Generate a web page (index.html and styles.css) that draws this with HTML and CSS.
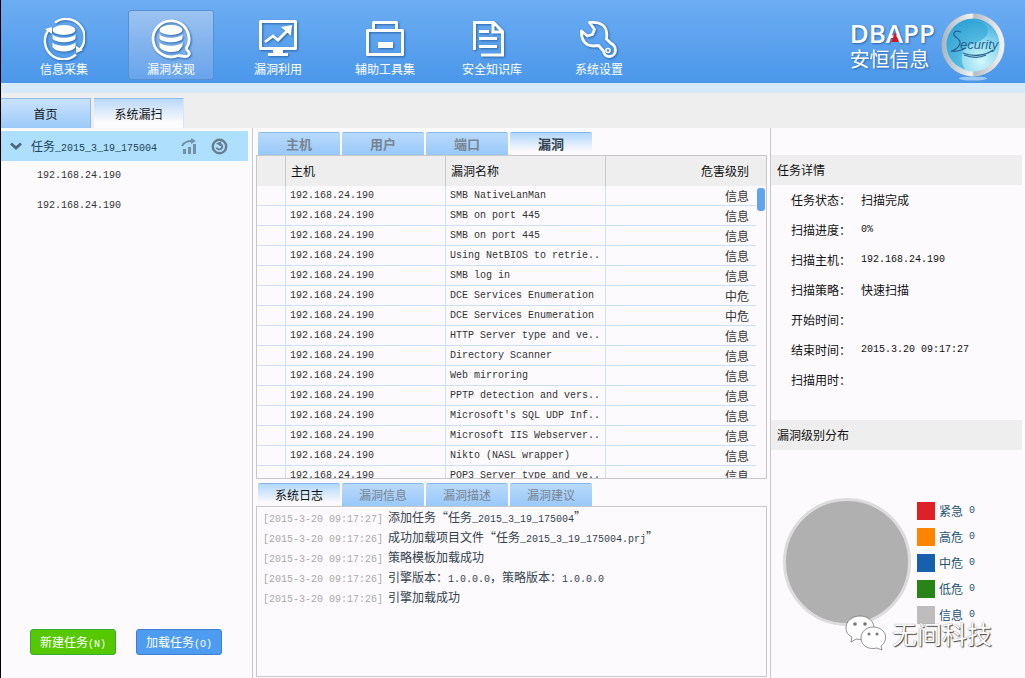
FILE: index.html
```
<!DOCTYPE html>
<html lang="zh-CN">
<head>
<meta charset="utf-8">
<title>系统漏扫</title>
<link rel="stylesheet" href="styles.css">
</head>
<body>
<div class="app">
  <header class="header">
    <nav class="toolbar">
      <button class="tool" type="button">
        <svg class="tool-icon" viewBox="0 0 42 42">
          <g fill="none" stroke="#fff" stroke-width="2.4"><path d="M12 4.600A18.500 18.500 0 0 1 37.500 31"/><path d="M33 36.500A18.500 18.500 0 0 1 5.500 12"/></g>
          <path d="M2 11l7-2v7zM40 32l-7 3 0-7z" fill="#fff"/>
          <ellipse cx="21" cy="12" rx="11.500" ry="5" fill="#fff"/>
          <path d="M9.500 16c3 5 20 5 23 0v4.500c-3 5-20 5-23 0zM9.500 24c3 5 20 5 23 0v5c-3 6-20 6-23 0z" fill="#fff"/>
        </svg>
        <span>信息采集</span>
      </button>
      <button class="tool active" type="button">
        <svg class="tool-icon" viewBox="0 0 42 42">
          <path d="M28 37.500A18 18 0 1 1 38 27c-2 3-2 4 0 6 3 3 0 6-3 5.500l-7-1" fill="none" stroke="#fff" stroke-width="2.800"/>
          <ellipse cx="21" cy="12" rx="11.500" ry="5" fill="#fff"/>
          <path d="M9.500 16c3 5 20 5 23 0v4.500c-3 5-20 5-23 0zM9.500 24c3 5 20 5 23 0v4l-4 5c-7 2-16 1-19-4z" fill="#fff"/>
        </svg>
        <span>漏洞发现</span>
      </button>
      <button class="tool" type="button">
        <svg class="tool-icon" viewBox="0 0 42 42">
          <path d="M3.500 3.500h35v27h-35z" fill="none" stroke="#fff" stroke-width="3" stroke-linejoin="round"/>
          <path d="M8 24l8-6 5 4 10-10" fill="none" stroke="#fff" stroke-width="2.800"/>
          <path d="M24 9l11-2-1 11zM16 31h10v4h5v3H11v-3h5z" fill="#fff"/>
        </svg>
        <span>漏洞利用</span>
      </button>
      <button class="tool" type="button">
        <svg class="tool-icon" viewBox="0 0 42 42">
          <path d="M9.500 11.500V4.500h23v7M3.500 12.500h35v24h-35z" fill="none" stroke="#fff" stroke-width="3" stroke-linejoin="round"/>
          <path d="M14 24h15v6H14z" fill="#fff"/>
        </svg>
        <span>辅助工具集</span>
      </button>
      <button class="tool" type="button">
        <svg class="tool-icon" viewBox="0 0 42 42">
          <path d="M3.500 32V4.500h19l9 9V37H10M22 5v9h9" fill="none" stroke="#fff" stroke-width="3"/>
          <path d="M8 13.500h10M8 20.500h18M8 28.500h18" stroke="#fff" stroke-width="3"/>
        </svg>
        <span>安全知识库</span>
      </button>
      <button class="tool" type="button">
        <svg class="tool-icon" viewBox="0 0 42 42">
          <path d="M11.500 4.500l5 7-2 5-5 1.500-6-5c-.5 9 4 15 12 15l5-.5 5 5.500c1 8 12 7 12-1 0-4-3-6-5-7l-4-4c1-7 0-11-4-14-4-3-8-3-13-2.500z" fill="none" stroke="#fff" stroke-width="2.800" stroke-linejoin="round"/>
          <circle cx="30" cy="32.500" r="2" fill="none" stroke="#fff" stroke-width="1.600"/>
        </svg>
        <span>系统设置</span>
      </button>
    </nav>
    <div class="brand">
      <div class="brand-name">
        <div class="brand-en">DB<span class="brand-a">A<svg viewBox="0 0 8 11"><path d="M4 0l4 11H0z" fill="#e01020"/></svg></span>PP</div>
        <div class="brand-cn">安恒信息</div>
      </div>
      <svg class="globe" viewBox="0 0 64 68">
        <defs>
          <linearGradient id="rim" x1="0" x2="1"><stop offset="0" stop-color="#a9b4c0"/><stop offset=".48" stop-color="#f2f2f2"/><stop offset=".52" stop-color="#b8bec6"/><stop offset="1" stop-color="#f4f4f4"/></linearGradient>
          <radialGradient id="sea" cx=".65" cy=".8" r=".8"><stop offset="0" stop-color="#d2f7fb"/><stop offset=".5" stop-color="#8bd9f0"/><stop offset="1" stop-color="#36a5da"/></radialGradient>
        </defs>
        <ellipse cx="32" cy="65.500" rx="14" ry="2" fill="#9cc8f5"/>
        <circle cx="32" cy="32" r="31.500" fill="url(#rim)"/>
        <circle cx="32" cy="32" r="26.500" fill="url(#sea)"/>
        <path d="M18 11c8-6 22-5 28 3 3 7-2 11-7 14-10 4-17 5-18 14-1 5 0 10 3 14C10 52 4 38 6 27c2-7 6-12 12-16z" fill="#2fa3d4" opacity=".6"/>
        <path d="M20 19c-8-3-9 3-4 6s4 9-5 13c5 1 10-1 14-3M22 40c9 4 22 3 30-3M23 42c8 3 16 3 22 0" fill="none" stroke="#29648f" stroke-width="1.300"/>
        <text x="19" y="36" class="globe-text">ecurity</text>
      </svg>
    </div>
  </header>
  <nav class="page-tabs">
    <button class="page-tab" type="button">首页</button>
    <button class="page-tab active" type="button">系统漏扫</button>
  </nav>
  <main class="workspace">
    <aside class="sidebar">
      <div class="task">
        <svg class="chevron" viewBox="0 0 12 8"><path d="M1 1.500l5 4.500 5-4.500" fill="none" stroke="#4c6a7c" stroke-width="2.800"/></svg>
        <span class="task-name">任务<span class="en">_2015_3_19_175004</span></span>
        <svg class="task-icon" viewBox="0 0 17 17"><path d="M2 11h3v5H2zM7 9h3v7H7zM12 6h3v10h-3z" fill="#7293a6"/><path d="M1 8c2-4 6-5 10-5" fill="none" stroke="#7293a6" stroke-width="2"/><path d="M10 0l5 3-5 3z" fill="#7293a6"/></svg>
        <svg class="task-icon" viewBox="0 0 17 17"><circle cx="8.500" cy="8.500" r="6.700" fill="none" stroke="#647e8e" stroke-width="2.400"/><path d="M9 5.500a3 3 0 1 1-3.500 4" fill="none" stroke="#647e8e" stroke-width="1.800"/><path d="M5 5.500l5-2v5z" fill="#647e8e"/></svg>
      </div>
      <div class="host en">192.168.24.190</div>
      <div class="host en">192.168.24.190</div>
      <div class="actions">
        <button class="action new" type="button">新建任务<span class="en">(N)</span></button>
        <button class="action load" type="button">加载任务<span class="en">(O)</span></button>
      </div>
    </aside>
    <section class="center">
      <div class="tabs results-tabs">
        <button class="tab" type="button">主机</button>
        <button class="tab" type="button">用户</button>
        <button class="tab" type="button">端口</button>
        <button class="tab active" type="button">漏洞</button>
      </div>
      <div class="results">
        <table>
          <colgroup><col class="c-mark"><col class="c-host"><col class="c-name"><col><col class="c-scroll"></colgroup>
          <thead><tr><th></th><th>主机</th><th>漏洞名称</th><th class="level">危害级别</th><th></th></tr></thead>
          <tbody>
            <tr><td></td><td class="en">192.168.24.190</td><td class="en">SMB NativeLanMan</td><td class="level">信息</td></tr>
            <tr><td></td><td class="en">192.168.24.190</td><td class="en">SMB on port 445</td><td class="level">信息</td></tr>
            <tr><td></td><td class="en">192.168.24.190</td><td class="en">SMB on port 445</td><td class="level">信息</td></tr>
            <tr><td></td><td class="en">192.168.24.190</td><td class="en">Using NetBIOS to retrie..</td><td class="level">信息</td></tr>
            <tr><td></td><td class="en">192.168.24.190</td><td class="en">SMB log in</td><td class="level">信息</td></tr>
            <tr><td></td><td class="en">192.168.24.190</td><td class="en">DCE Services Enumeration</td><td class="level">中危</td></tr>
            <tr><td></td><td class="en">192.168.24.190</td><td class="en">DCE Services Enumeration</td><td class="level">中危</td></tr>
            <tr><td></td><td class="en">192.168.24.190</td><td class="en">HTTP Server type and ve..</td><td class="level">信息</td></tr>
            <tr><td></td><td class="en">192.168.24.190</td><td class="en">Directory Scanner</td><td class="level">信息</td></tr>
            <tr><td></td><td class="en">192.168.24.190</td><td class="en">Web mirroring</td><td class="level">信息</td></tr>
            <tr><td></td><td class="en">192.168.24.190</td><td class="en">PPTP detection and vers..</td><td class="level">信息</td></tr>
            <tr><td></td><td class="en">192.168.24.190</td><td class="en">Microsoft's SQL UDP Inf..</td><td class="level">信息</td></tr>
            <tr><td></td><td class="en">192.168.24.190</td><td class="en">Microsoft IIS Webserver..</td><td class="level">信息</td></tr>
            <tr><td></td><td class="en">192.168.24.190</td><td class="en">Nikto (NASL wrapper)</td><td class="level">信息</td></tr>
            <tr><td></td><td class="en">192.168.24.190</td><td class="en">POP3 Server type and ve..</td><td class="level">信息</td></tr>
          </tbody>
        </table>
        <div class="thumb"></div>
      </div>
      <div class="tabs log-tabs">
        <button class="tab active" type="button">系统日志</button>
        <button class="tab" type="button">漏洞信息</button>
        <button class="tab" type="button">漏洞描述</button>
        <button class="tab" type="button">漏洞建议</button>
      </div>
      <div class="log">
        <p><time class="en">[2015-3-20 09:17:27]</time>添加任务“任务<span class="en">_2015_3_19_175004</span>”</p>
        <p><time class="en">[2015-3-20 09:17:26]</time>成功加载项目文件“任务<span class="en">_2015_3_19_175004.prj</span>”</p>
        <p><time class="en">[2015-3-20 09:17:26]</time>策略模板加载成功</p>
        <p><time class="en">[2015-3-20 09:17:26]</time>引擎版本：<span class="en">1.0.0.0</span>，策略版本：<span class="en">1.0.0.0</span></p>
        <p><time class="en">[2015-3-20 09:17:26]</time>引擎加载成功</p>
      </div>
    </section>
    <aside class="details">
      <h2>任务详情</h2>
      <dl>
        <dt>任务状态：</dt><dd>扫描完成</dd>
        <dt>扫描进度：</dt><dd class="en">0%</dd>
        <dt>扫描主机：</dt><dd class="en">192.168.24.190</dd>
        <dt>扫描策略：</dt><dd>快速扫描</dd>
        <dt>开始时间：</dt><dd></dd>
        <dt>结束时间：</dt><dd class="en">2015.3.20 09:17:27</dd>
        <dt>扫描用时：</dt><dd></dd>
      </dl>
      <h2>漏洞级别分布</h2>
      <div class="chart">
        <div class="pie"></div>
        <ul class="legend">
          <li><i class="urgent"></i>紧急<span class="en">0</span></li>
          <li><i class="high"></i>高危<span class="en">0</span></li>
          <li><i class="medium"></i>中危<span class="en">0</span></li>
          <li><i class="low"></i>低危<span class="en">0</span></li>
          <li><i class="info"></i>信息<span class="en">0</span></li>
        </ul>
      </div>
    </aside>
  </main>
  <div class="watermark">
    <svg viewBox="0 0 42 36">
      <g fill="#fff" stroke="#777" stroke-width=".8">
        <path d="M15 1C7 1 1 6 1 13c0 4 2 7 6 9l-1 5 5-3c10 2 18-3 18-11C29 6 23 1 15 1z"/>
        <path d="M28 12c-7 0-12 5-12 11 0 8 8 12 16 10l5 2-1-4c9-7 4-19-8-19z"/>
      </g>
      <g fill="#777"><circle cx="10" cy="9" r="1.800"/><circle cx="20" cy="9" r="1.800"/><circle cx="24" cy="19" r="1.500"/><circle cx="32" cy="19" r="1.500"/></g>
    </svg>
    <span>无间科技</span>
  </div>
</div>
</body>
</html>
```
FILE: styles.css
```
* { box-sizing: border-box; }
body {
  margin: 0;
  font: 12px/20px "Noto Sans CJK SC", "Liberation Sans", sans-serif;
  color: #111;
  background: #fcfafc;
}
button { font: inherit; color: inherit; border: 0; padding: 0; background: none; }
.en { font-family: "Liberation Mono", "Noto Sans CJK SC", monospace; font-size: 10px; }
span.en, time.en { line-height: 1; }

.app {
  position: relative;
  display: flex;
  flex-direction: column;
  height: 100vh;
  border-left: 1px solid #000;
}

.header {
  display: flex;
  justify-content: space-between;
  flex: none;
  height: 93px;
  padding: 10px 20px 0;
  border-bottom: 10px solid #d6e9f8;
  background: linear-gradient(#6cadf3, #4b97ea);
}
.toolbar { display: flex; gap: 21px; }
.tool {
  display: flex;
  flex-direction: column;
  align-items: center;
  width: 86px;
  height: 70px;
  padding-top: 7px;
  border: 1px solid transparent;
  border-radius: 3px;
  color: #fff;
  line-height: 18px;
}
.tool.active {
  border-color: #5590d2;
  background: linear-gradient(#9cc3f0, #7fb1ed 55%, #68a5ec);
}
.tool-icon { width: 42px; height: 42px; flex: none; filter: drop-shadow(1px 1px 1px #2c66a8); }

.brand { display: flex; gap: 6px; color: #fff; text-shadow: 1px 1px 2px #2c66a8; }
.brand-name { padding-top: 9px; }
.brand-en { font: 600 26px/28px "Open Sans", sans-serif; }
.brand-a { position: relative; }
.brand-a svg { position: absolute; left: 5px; bottom: 9px; width: 8px; height: 10px; }
.brand-cn { font-size: 20px; line-height: 24px; }
.globe { width: 64px; height: 68px; margin-top: 3px; }
.globe-text { font: italic 13px "Liberation Sans", sans-serif; fill: #29648f; text-shadow: none; }

.page-tabs {
  display: flex;
  flex: none;
  gap: 3px;
  height: 35px;
  padding-top: 5px;
  background: #eee;
}
.page-tab {
  width: 90px;
  border: 1px solid #8dbde8;
  border-width: 1px 1px 0 0;
  background: linear-gradient(#c9e2fb, #9ccaf8);
}
.page-tab.active {
  border-color: #8fbcec #d5e6f7;
  background: linear-gradient(#b9d9fb, #fcfafc 80%);
}

.workspace { display: flex; flex: 1; min-height: 0; }
.sidebar {
  display: flex;
  flex-direction: column;
  flex: none;
  width: 252px;
  padding: 3px 4px 23px 0;
  border-right: 1px solid #c8c8cc;
}
.task {
  display: flex;
  align-items: center;
  height: 30px;
  padding-left: 9px;
  background: #aedffc;
  color: #24445a;
}
.chevron { width: 12px; height: 8px; margin-right: 9px; }
.task-name { width: 150px; }
.task-icon { width: 17px; height: 17px; margin-right: 13px; }
.host { padding-left: 36px; line-height: 30px; color: #333; }
.actions { display: flex; gap: 20px; margin-top: auto; padding-left: 29px; }
.action {
  width: 86px;
  height: 26px;
  border: 1px solid;
  border-radius: 3px;
  color: #fff;
}
.new { background: #55c800; border-color: #35aa35; }
.load { background: #4d9cf0; border-color: #3c7fd0; }

.center {
  display: flex;
  flex-direction: column;
  flex: 1;
  min-width: 0;
  padding: 4px 3px 1px;
}
.tabs { display: flex; gap: 2px; height: 23px; padding-left: 2px; flex: none; }
.tab {
  width: 82px;
  color: #788591;
  border-top: 1px solid #84b7ea;
  border-radius: 2px 2px 0 0;
  background: linear-gradient(#b9dafb, #98c8fa);
}
.tab.active { color: #111; background: linear-gradient(#b2d7fc, #fcfafc 85%); }
.results-tabs .tab { font-weight: bold; font-size: 13px; }
.results-tabs .active { color: #344354; }
.results {
  position: relative;
  flex: 1;
  min-height: 0;
  overflow: hidden;
  border: 1px solid #c8c8c8;
}
table { width: 100%; table-layout: fixed; border-collapse: separate; border-spacing: 0; }
.c-mark { width: 29px; }
.c-host { width: 160px; }
.c-name { width: 160px; }
.c-scroll { width: 10px; }
th {
  height: 30px;
  padding: 0 5px;
  background: #eee;
  font-weight: normal;
  text-align: left;
}
th:nth-child(-n+3) { border-right: 1px solid #c8c8c8; }
td {
  height: 20px;
  padding: 0 4px;
  line-height: 19px;
  white-space: nowrap;
  color: #333;
  border-bottom: 1px solid #cfdff3;
}
td:nth-child(-n+3) { border-right: 1px solid #cfdff3; }
th.level, td.level { text-align: right; padding-right: 7px; }
.thumb {
  position: absolute;
  top: 32px;
  right: 1px;
  width: 8px;
  height: 23px;
  border-radius: 3px;
  background: #60a4f0;
}
.log-tabs { margin-top: 4px; }
.log { flex: none; height: 171px; border: 1px solid #c8c8c8; padding: 0 6px; color: #34424f; }
.log p { margin: 0; height: 20px; white-space: nowrap; }
.log time { display: inline-block; width: 125px; color: #aaa; }

.details { flex: none; width: 255px; padding: 27px 3px 0 0; border-left: 1px solid #c8c8cc; }
.details h2 {
  margin: 0;
  padding-left: 6px;
  font-size: 12px;
  font-weight: normal;
  line-height: 30px;
  background: #eee;
}
.details dl {
  display: grid;
  grid-template-columns: 70px 1fr;
  grid-auto-rows: 30px;
  margin: 0;
  padding: 0 0 25px 20px;
  line-height: 30px;
}
.details dd { margin: 0; }
.chart { display: flex; gap: 6px; padding: 48px 0 0 12px; }
.pie {
  width: 128px;
  height: 128px;
  border: 3px solid #dcdcdc;
  border-radius: 50%;
  background: #b0b0b0;
}
.legend { margin: 0; padding: 0; list-style: none; color: #1e5574; }
.legend li { display: flex; align-items: center; height: 26px; }
.legend i { width: 18px; height: 18px; margin-right: 4px; }
.legend span { margin-left: 6px; }
.urgent { background: #e02027; }
.high { background: #ff8500; }
.medium { background: #1760ae; }
.low { background: #278517; }
.info { background: #bdbdbd; }

.watermark {
  position: absolute;
  right: 33px;
  bottom: 27px;
  display: flex;
  align-items: center;
  gap: 5px;
  font-size: 25px;
  line-height: 36px;
  color: #fff;
  text-shadow: 1px 1px 1px #444, 0 0 1px #666;
}
.watermark svg { width: 42px; height: 36px; }
```
